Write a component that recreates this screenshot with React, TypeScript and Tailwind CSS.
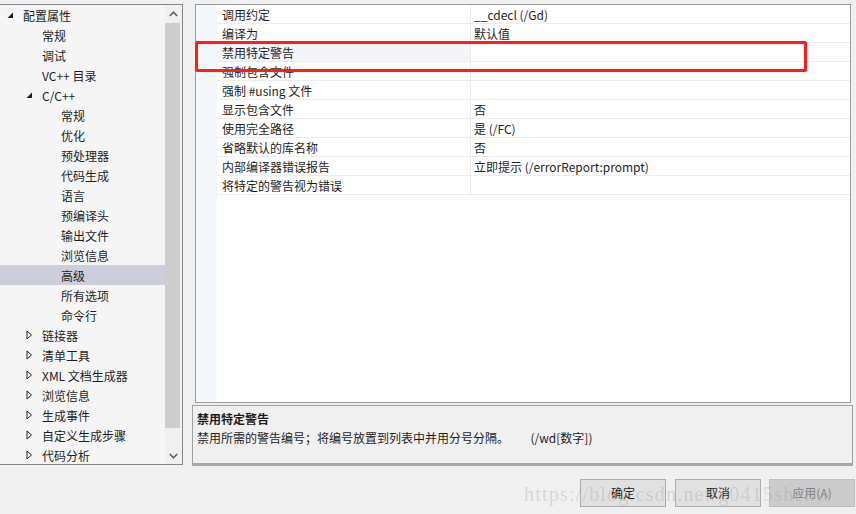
import React from 'react';

type Node = { label: string; level: 0 | 1 | 2; expand?: 'open' | 'closed'; selected?: boolean };

const tree: Node[] = [
  { label: '配置属性', level: 0, expand: 'open' },
  { label: '常规', level: 1 },
  { label: '调试', level: 1 },
  { label: 'VC++ 目录', level: 1 },
  { label: 'C/C++', level: 1, expand: 'open' },
  { label: '常规', level: 2 },
  { label: '优化', level: 2 },
  { label: '预处理器', level: 2 },
  { label: '代码生成', level: 2 },
  { label: '语言', level: 2 },
  { label: '预编译头', level: 2 },
  { label: '输出文件', level: 2 },
  { label: '浏览信息', level: 2 },
  { label: '高级', level: 2, selected: true },
  { label: '所有选项', level: 2 },
  { label: '命令行', level: 2 },
  { label: '链接器', level: 1, expand: 'closed' },
  { label: '清单工具', level: 1, expand: 'closed' },
  { label: 'XML 文档生成器', level: 1, expand: 'closed' },
  { label: '浏览信息', level: 1, expand: 'closed' },
  { label: '生成事件', level: 1, expand: 'closed' },
  { label: '自定义生成步骤', level: 1, expand: 'closed' },
  { label: '代码分析', level: 1, expand: 'closed' },
];

const props: [string, string][] = [
  ['调用约定', '__cdecl (/Gd)'],
  ['编译为', '默认值'],
  ['禁用特定警告', ''],
  ['强制包含文件', ''],
  ['强制 #using 文件', ''],
  ['显示包含文件', '否'],
  ['使用完全路径', '是 (/FC)'],
  ['省略默认的库名称', '否'],
  ['内部编译器错误报告', '立即提示 (/errorReport:prompt)'],
  ['将特定的警告视为错误', ''],
];

const indent = { 0: 'pl-[23px]', 1: 'pl-[42px]', 2: 'pl-[61px]' };
const arrowPos = { 0: 'left-[7px]', 1: 'left-[26px]', 2: 'left-[45px]' };

function Expander({ kind }: { kind: 'open' | 'closed' }) {
  if (kind === 'open') {
    return (
      <svg width="7" height="7" viewBox="0 0 7 7">
        <path d="M6 0.5 L6 6 L0.5 6 Z" fill="#1e1e1e" />
      </svg>
    );
  }
  return (
    <svg width="7" height="10" viewBox="0 0 7 10">
      <path d="M1 1 L5.5 5 L1 9 Z" fill="none" stroke="#1e1e1e" strokeWidth="1" />
    </svg>
  );
}

function Tree() {
  return (
    <div className="flex w-[183px] h-[461px] bg-[#f5f5f5] border-t border-r border-b border-[#828790] overflow-hidden">
      <div className="w-[165px] flex flex-col">
        {tree.map((n, i) => (
          <div
            key={i}
            className={`relative h-[20px] shrink-0 flex items-center pt-[1px] ${indent[n.level]} ${n.selected ? 'bg-[#cccedb]' : ''}`}
          >
            {n.expand && (
              <span className={`absolute top-0 h-[20px] flex items-center ${arrowPos[n.level]}`}>
                <Expander kind={n.expand} />
              </span>
            )}
            <span className="whitespace-nowrap">{n.label}</span>
          </div>
        ))}
      </div>
      <div className="w-[17px] bg-[#f0f0f0] flex flex-col">
        <div className="h-[18px] flex items-center justify-center">
          <svg width="9" height="6" viewBox="0 0 9 6">
            <path d="M0.8 5 L4.5 1.2 L8.2 5" fill="none" stroke="#606060" strokeWidth="1.6" />
          </svg>
        </div>
        <div className="h-[405px] bg-[#cdcdcd] w-[15px]" />
        <div className="flex-1 flex items-end justify-center pb-[5px]">
          <svg width="9" height="6" viewBox="0 0 9 6">
            <path d="M0.8 1 L4.5 4.8 L8.2 1" fill="none" stroke="#606060" strokeWidth="1.6" />
          </svg>
        </div>
      </div>
    </div>
  );
}

function Grid() {
  return (
    <div className="ml-[3px] w-[656px] h-[399px] bg-white border border-[#9a9a9a] flex">
      <div className="w-[21px] bg-[#f3f6fb]" />
      <div className="flex-1 flex flex-col">
        {props.map(([k, v], i) => (
          <div key={i} className="h-[19px] flex border-b border-[#ececf0]">
            <div className={`w-[253px] pl-[5px] pt-[2px] flex items-center whitespace-nowrap ${i === 2 ? 'bg-[#f3f5f9]' : ''}`}>{k}</div>
            <div className="flex-1 pl-[3px] pt-[2px] flex items-center border-l border-[#ececf0] whitespace-nowrap">{v}</div>
          </div>
        ))}
      </div>
    </div>
  );
}

function Btn({ label, disabled }: { label: string; disabled?: boolean }) {
  return (
    <div
      className={`w-[86px] h-[28px] flex items-center justify-center border ${
        disabled ? 'bg-[#cccccc] border-[#bfbfbf] text-[#838383]' : 'bg-[#e1e1e1] border-[#adadad]'
      }`}
    >
      {label}
    </div>
  );
}

export default function App() {
  return (
    <div
      className="relative w-[856px] h-[514px] bg-[#f0f0f0] overflow-hidden text-[12px] text-[#1e1e1e]"
      style={{ fontFamily: '"Noto Sans CJK SC", "Noto Sans", sans-serif' }}
    >
      <div className="flex pt-[4px]">
        <Tree />
        <div className="ml-[9px] flex flex-col">
          <Grid />
          <div className="mt-[2px] w-[661px] h-[61px] bg-[#f0f0f0] border border-[#a0a0a0] border-b-[3px] border-b-[#a8a8a8] px-[4px] pt-[3px]">
            <div className="font-bold h-[19px] leading-[19px]">禁用特定警告</div>
            <div className="h-[19px] leading-[19px] whitespace-pre">禁用所需的警告编号；将编号放置到列表中并用分号分隔。        (/wd[数字])</div>
          </div>
        </div>
      </div>
      <div className="flex justify-end mt-[13px] pr-[1px]">
        <Btn label="确定" />
        <div className="w-[9px]" />
        <Btn label="取消" />
        <div className="w-[8px]" />
        <Btn label="应用(A)" disabled />
      </div>

      <div className="absolute left-[195px] top-[41px] w-[612px] h-[31px] border-[3px] border-[#ff1c1c] rounded-[2px]" />
      <div
        className="absolute left-[524px] top-[479px] text-[20px] tracking-[1.2px] text-[#9a9a9a]/30 whitespace-nowrap pointer-events-none"
        style={{ fontFamily: '"Liberation Serif", serif' }}
      >
        https://blog.csdn.net/g0415shenw
      </div>
    </div>
  );
}
